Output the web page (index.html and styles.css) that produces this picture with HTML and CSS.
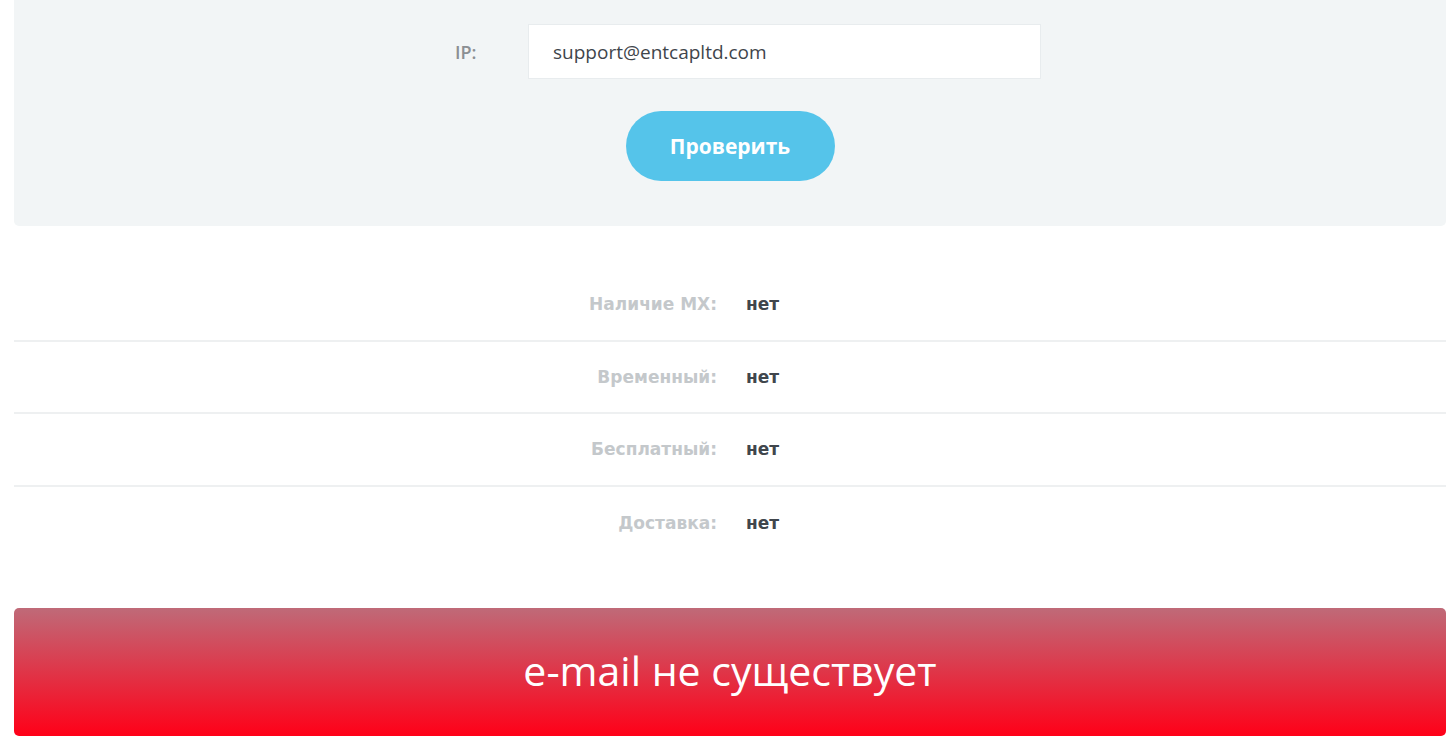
FILE: index.html
```html
<!DOCTYPE html>
<html lang="ru">
<head>
<meta charset="UTF-8" />
<meta name="viewport" content="width=device-width, initial-scale=1" />
<title>Проверка e-mail</title>
<link rel="stylesheet" href="styles.css">
</head>
<body>

<div class="page">
  <form class="check-panel" onsubmit="return false">
    <div class="check-row">
      <label class="check-label" for="emailInput">IP:</label>
      <input type="text" id="emailInput" class="check-input" value="support@entcapltd.com" />
    </div>
    <button type="submit" class="check-btn">Проверить</button>
  </form>

  <div class="result-table">
    <div class="result-row">
      <div class="result-name">Наличие MX:</div>
      <div class="result-value">нет</div>
    </div>
    <div class="result-row">
      <div class="result-name">Временный:</div>
      <div class="result-value">нет</div>
    </div>
    <div class="result-row">
      <div class="result-name">Бесплатный:</div>
      <div class="result-value">нет</div>
    </div>
    <div class="result-row">
      <div class="result-name">Доставка:</div>
      <div class="result-value">нет</div>
    </div>
  </div>

  <div class="result-status">e-mail не существует</div>
</div>

</body>
</html>
```

FILE: styles.css
```css
body {
  margin: 0;
  font-family: "Open Sans", Lato, sans-serif;
  background: #fff;
  color: #444b52;
}
.page {
  padding: 0 10px 0 14px;
}
.check-panel {
  background: #f2f5f6;
  border-radius: 0 0 5px 5px;
  padding: 24px 0 45px;
  display: flex;
  flex-direction: column;
  align-items: center;
}
.check-row {
  display: flex;
  align-items: center;
  padding-left: 36px;
}
.check-label {
  width: 73px;
  font-size: 18px;
  font-weight: 600;
  color: #8b8f93;
}
.check-input {
  width: 513px;
  height: 55px;
  box-sizing: border-box;
  border: 1px solid #e8ecee;
  background: #fff;
  padding: 0 24px;
  font-family: "Open Sans", Lato, sans-serif;
  font-size: 19px;
  color: #3f454b;
  outline: none;
}
.check-btn {
  margin-top: 32px;
  width: 209px;
  height: 70px;
  border: none;
  border-radius: 35px;
  background: #55c4ea;
  color: #fff;
  font-family: "Open Sans", Lato, sans-serif;
  font-size: 21px;
  font-weight: 700;
  cursor: pointer;
}
.result-table {
  margin-top: 43px;
}
.result-row {
  display: grid;
  grid-template-columns: 1fr 1fr;
  box-sizing: border-box;
  height: 72.5px;
  align-items: center;
  border-bottom: 2px solid #eef0f1;
}
.result-row:last-child {
  border-bottom: none;
}
.result-name {
  text-align: right;
  padding-right: 13px;
  font-family: "DejaVu Sans", sans-serif;
  font-size: 17px;
  font-weight: bold;
  color: #c4c8cb;
}
.result-value {
  padding-left: 16px;
  font-family: "DejaVu Sans", sans-serif;
  font-size: 17px;
  font-weight: bold;
  color: #40464c;
}
.result-status {
  margin-top: 49px;
  height: 128px;
  border-radius: 5px;
  background: linear-gradient(to bottom, #bf6a78, #ff0018);
  color: #fff;
  font-size: 41px;
  font-weight: 500;
  display: flex;
  align-items: center;
  justify-content: center;
  padding-bottom: 4px;
  box-sizing: border-box;
}
```
